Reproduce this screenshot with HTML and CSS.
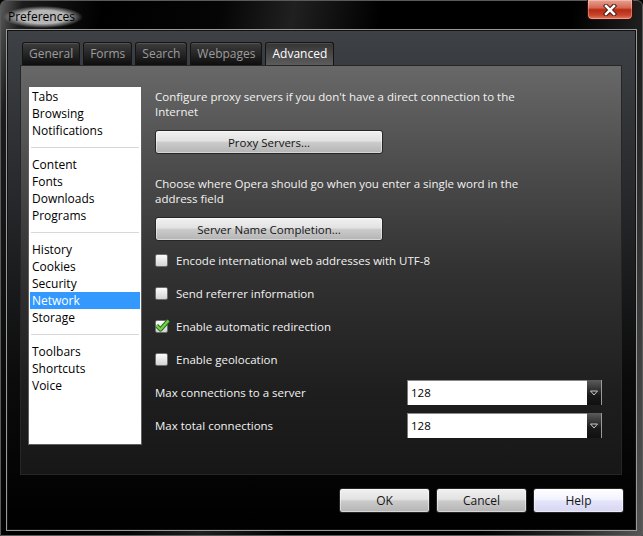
FILE: index.html
```html
<!DOCTYPE html>
<html lang="en">
<head>
  <meta charset="UTF-8">
  <title>Preferences</title>
  <link rel="stylesheet" href="styles.css">
</head>
<body>

  <div class="window">
    <div class="titlebar">
      <span class="title">Preferences</span>
      <button class="close" type="button" aria-label="Close">
        <svg width="14" height="12" viewBox="0 0 14 12">
          <path d="M3 2 L11 10 M11 2 L3 10" stroke="#3a0a04" stroke-width="4.4" stroke-linecap="square"/>
          <path d="M3 2 L11 10 M11 2 L3 10" stroke="#fff" stroke-width="2.6" stroke-linecap="square"/>
        </svg>
      </button>
    </div>

    <div class="frame">
      <div class="tabs">
        <div class="tab">General</div>
        <div class="tab">Forms</div>
        <div class="tab">Search</div>
        <div class="tab">Webpages</div>
        <div class="tab active">Advanced</div>
      </div>

      <div class="panel">
        <ul class="sections">
          <li>Tabs</li>
          <li>Browsing</li>
          <li>Notifications</li>
          <li class="sep"></li>
          <li>Content</li>
          <li>Fonts</li>
          <li>Downloads</li>
          <li>Programs</li>
          <li class="sep"></li>
          <li>History</li>
          <li>Cookies</li>
          <li>Security</li>
          <li class="selected">Network</li>
          <li>Storage</li>
          <li class="sep"></li>
          <li>Toolbars</li>
          <li>Shortcuts</li>
          <li>Voice</li>
        </ul>

        <div class="settings">
          <p class="hint">Configure proxy servers if you don't have a direct connection to the<br>Internet</p>
          <button class="btn wide" type="button">Proxy Servers...</button>

          <p class="hint second">Choose where Opera should go when you enter a single word in the<br>address field</p>
          <button class="btn wide" type="button">Server Name Completion...</button>

          <label class="check first"><span class="box"></span>Encode international web addresses with UTF-8</label>
          <label class="check"><span class="box"></span>Send referrer information</label>
          <label class="check"><span class="box checked">
            <svg width="17" height="16" viewBox="0 0 17 16">
              <path d="M2.5 8.5 L6.5 12.5 L14.5 3.5" fill="none" stroke="#2d6a1c" stroke-width="4.2" stroke-linejoin="round"/>
              <path d="M2.5 8.5 L6.5 12.5 L14.5 3.5" fill="none" stroke="#6fd64a" stroke-width="2.2" stroke-linejoin="round"/>
            </svg>
          </span>Enable automatic redirection</label>
          <label class="check"><span class="box"></span>Enable geolocation</label>

          <div class="field first">
            <span class="field-label">Max connections to a server</span>
            <div class="combo">
              <span class="value">128</span>
              <span class="arrow">
                <svg width="10" height="8" viewBox="0 0 10 8"><polygon points="1.5,2 8.5,2 5,6" fill="none" stroke="#c8c8c8" stroke-width="1"/></svg>
              </span>
            </div>
          </div>
          <div class="field">
            <span class="field-label">Max total connections</span>
            <div class="combo">
              <span class="value">128</span>
              <span class="arrow">
                <svg width="10" height="8" viewBox="0 0 10 8"><polygon points="1.5,2 8.5,2 5,6" fill="none" stroke="#c8c8c8" stroke-width="1"/></svg>
              </span>
            </div>
          </div>
        </div>
      </div>

      <div class="actions">
        <button class="btn" type="button">OK</button>
        <button class="btn" type="button">Cancel</button>
        <button class="btn default" type="button">Help</button>
      </div>
    </div>
  </div>

</body>
</html>
```

FILE: styles.css
```css
body {
  margin: 0;
  background: #000;
  font-family: 'Open Sans', 'Noto Sans', sans-serif;
  font-size: 11px;
}

.window {
  width: 643px;
  height: 536px;
  box-sizing: border-box;
  display: flex;
  flex-direction: column;
  border: 1px solid #5a5a5a;
  border-radius: 6px 6px 0 0;
  background: linear-gradient(100deg, #5a5a5a 0%, #1c1c1c 3%, #000 14%, #050505 30%, #202020 40%, #000 52%, #000 78%, #262626 90%, #555 100%);
}

.titlebar {
  height: 28px;
  display: flex;
  justify-content: space-between;
  align-items: flex-start;
  padding-left: 2px;
}

.title {
  margin-top: 5px;
  padding: 2px 8px 3px 5px;
  color: #000;
  font-size: 12px;
  background: radial-gradient(ellipse closest-side, rgba(200, 200, 200, 0.9) 60%, rgba(200, 200, 200, 0));
}

.close {
  width: 46px;
  height: 20px;
  margin: -1px 9px 0 0;
  padding: 0;
  display: flex;
  align-items: center;
  justify-content: center;
  border: 1px solid #3c0d07;
  border-top: none;
  border-radius: 0 0 5px 5px;
  background: linear-gradient(#e9a091 0%, #d56a55 40%, #b82a12 52%, #c7462e 80%, #e07e64 100%);
  box-shadow: inset 0 0 0 1px rgba(255, 255, 255, 0.3);
}

.frame {
  flex: 1;
  margin: 0 5px 4px 5px;
  padding: 12px 14px 0 13px;
  border: 1px solid #9a9a9a;
  background: linear-gradient(#3e4145 0%, #25272a 35%, #0b0b0b 70%, #000 100%);
  box-shadow: inset 0 0 0 1px #111;
}

.tabs {
  display: flex;
  gap: 3px;
  margin-left: 2px;
  height: 23px;
}

.tab {
  padding: 0 6px;
  line-height: 22px;
  border: 1px solid #141414;
  border-bottom: none;
  border-radius: 3px 3px 0 0;
  background: linear-gradient(#3d3d3d, #0e0e0e);
  box-shadow: inset 0 1px 0 rgba(255, 255, 255, 0.12);
  color: #9c9c9c;
  font-size: 12px;
}

.tab.active {
  background: linear-gradient(#343434, #5c5c5c);
  color: #fff;
}

.panel {
  height: 410px;
  box-sizing: border-box;
  display: flex;
  gap: 13px;
  padding: 20px 19px 0 7px;
  border: 1px solid #262626;
  background: linear-gradient(#686868 0%, #4c4c4c 25%, #323232 50%, #1e1e1e 80%, #171717 100%);
}

.sections {
  width: 114px;
  height: 359px;
  box-sizing: border-box;
  margin: 0;
  padding: 1px;
  list-style: none;
  background: #fff;
  border: 1px solid #5f5f5f;
  color: #000;
  font-size: 12px;
}

.sections li {
  padding-left: 2px;
  line-height: 17px;
}

.sections .sep {
  height: 1px;
  margin: 8px 1px;
  padding: 0;
  background: #d8d8d8;
}

.sections .selected {
  background: #3399ff;
  color: #fff;
}

.settings {
  flex: 1;
  display: flex;
  flex-direction: column;
  align-items: flex-start;
  color: #f2f2f2;
  font-size: 11.5px;
}

.hint {
  margin: 3px 0 0;
  line-height: 15px;
}

.hint.second {
  margin-top: 22px;
}

.btn {
  height: 25px;
  padding: 0;
  border: 1px solid #262626;
  border-radius: 3px;
  background: linear-gradient(#f1f1f1 0%, #e2e2e2 45%, #cbcbcb 52%, #b4b4b4 100%);
  box-shadow: inset 0 0 0 1px rgba(255, 255, 255, 0.45);
  color: #151515;
  font-family: inherit;
  font-size: 12px;
}

.btn.wide {
  width: 228px;
  height: 24px;
  margin-top: 11px;
  font-size: 11.5px;
}

.btn.default {
  background: linear-gradient(#ffffff 0%, #f3f3ff 45%, #e4e4fa 52%, #d6d6f2 100%);
}

.check {
  display: flex;
  align-items: center;
  height: 17px;
  margin-top: 16px;
}

.check.first {
  margin-top: 11px;
}

.box {
  position: relative;
  width: 13px;
  height: 13px;
  box-sizing: border-box;
  margin-right: 8px;
  border: 1px solid #6e6e6e;
  border-radius: 2px;
  background: linear-gradient(#fbfbfb, #d4d4d4);
}

.box svg {
  position: absolute;
  left: -2px;
  top: -4px;
}

.field {
  display: flex;
  align-items: center;
  margin-top: 8px;
}

.field.first {
  margin-top: 12px;
}

.field-label {
  width: 252px;
}

.combo {
  display: flex;
  width: 195px;
  height: 25px;
  box-sizing: border-box;
  border-right: 1px solid #9a9a9a;
}

.value {
  flex: 1;
  padding-left: 3px;
  line-height: 24px;
  background: #fff;
  border-top: 1px solid #8a8a8a;
  border-left: 1px solid #7a7a7a;
  color: #000;
}

.arrow {
  width: 14px;
  display: flex;
  align-items: center;
  justify-content: center;
  background: linear-gradient(#5c5c5c, #1a1a1a 60%, #101010);
}

.actions {
  display: flex;
  justify-content: flex-end;
  gap: 6px;
  margin: 13px -2px 0 0;
}

.actions .btn {
  width: 91px;
}
```
